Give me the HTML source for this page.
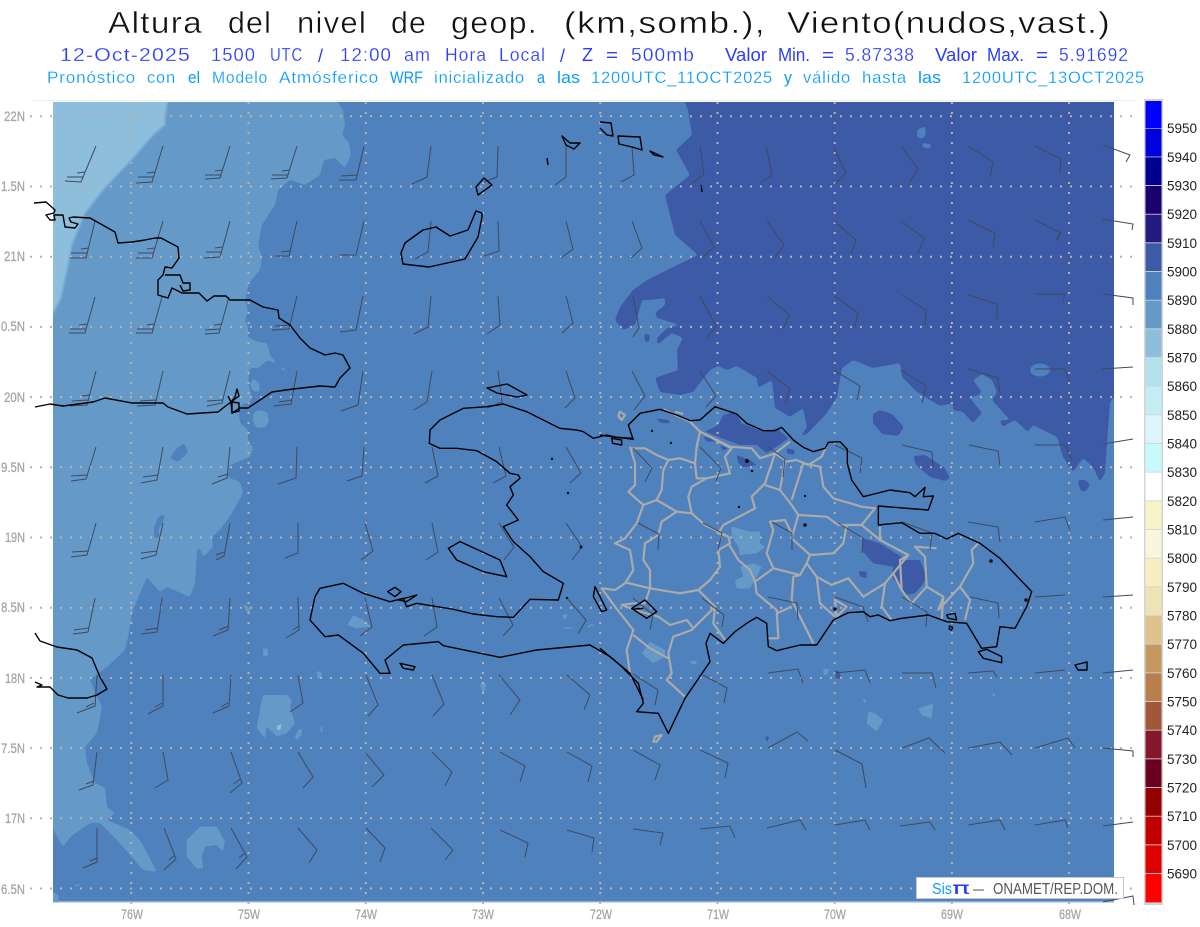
<!DOCTYPE html>
<html lang="es"><head><meta charset="utf-8"><title>Altura del nivel de geop.</title>
<style>
html,body{margin:0;padding:0;background:#fff}
svg{display:block;font-family:"Liberation Sans",sans-serif}
text{white-space:pre}
.s path{vector-effect:non-scaling-stroke}
.ax{font-size:14px;fill:#a6a6a6;stroke:#a6a6a6;stroke-width:.3px}
.cb{font-size:13.5px;fill:#222}
.t1 text{font-size:31px;fill:#111;stroke:#fff;stroke-width:.45px;letter-spacing:1.2px}
.t2 text{font-size:18px;fill:#2a3cff;stroke:#fff;stroke-width:.22px;letter-spacing:1px}
.t3 text{font-size:17px;fill:#0a9aff;stroke:#fff;stroke-width:.22px;letter-spacing:.8px}
.t2 .n,.t3 .n{letter-spacing:0;stroke-width:0}
</style></head><body>
<svg width="1200" height="927" viewBox="0 0 1200 927" xmlns="http://www.w3.org/2000/svg">
<defs>
<filter id="sm" x="-5%" y="-5%" width="110%" height="110%" color-interpolation-filters="sRGB">
<feGaussianBlur stdDeviation="1.4"/>
<feComponentTransfer><feFuncA type="linear" slope="7" intercept="-3"/></feComponentTransfer>
</filter>
<filter id="soft" x="0" y="0" width="1200" height="927" filterUnits="userSpaceOnUse">
<feGaussianBlur stdDeviation=".3"/>
</filter>
</defs>
<rect width="1200" height="927" fill="#fff"/>

<g class="t1">
<text x="108" y="33" textLength="95" lengthAdjust="spacingAndGlyphs">Altura</text>
<text x="228" y="33" textLength="44" lengthAdjust="spacingAndGlyphs">del</text>
<text x="297" y="33" textLength="70" lengthAdjust="spacingAndGlyphs">nivel</text>
<text x="391" y="33" textLength="36" lengthAdjust="spacingAndGlyphs">de</text>
<text x="451" y="33" textLength="87" lengthAdjust="spacingAndGlyphs">geop.</text>
<text x="564" y="33" textLength="202" lengthAdjust="spacingAndGlyphs">(km,somb.),</text>
<text x="787" y="33" textLength="324" lengthAdjust="spacingAndGlyphs">Viento(nudos,vast.)</text>
</g>
<g class="t2">
<text x="60" y="61" textLength="131" lengthAdjust="spacingAndGlyphs">12-Oct-2025</text>
<text x="211" y="61" textLength="45" lengthAdjust="spacingAndGlyphs">1500</text>
<text x="270" y="61" textLength="33" lengthAdjust="spacingAndGlyphs">UTC</text>
<text class="n" x="318" y="62" font-size="20">/</text>
<text x="340" y="61" textLength="52" lengthAdjust="spacingAndGlyphs">12:00</text>
<text x="404" y="61" textLength="27" lengthAdjust="spacingAndGlyphs">am</text>
<text x="445" y="61" textLength="42" lengthAdjust="spacingAndGlyphs">Hora</text>
<text x="499" y="61" textLength="47" lengthAdjust="spacingAndGlyphs">Local</text>
<text class="n" x="560" y="62" font-size="20">/</text>
<text class="n" x="582" y="61" textLength="11" lengthAdjust="spacingAndGlyphs">Z</text>
<text class="n" x="606" y="61" textLength="12" lengthAdjust="spacingAndGlyphs">=</text>
<text x="631" y="61" textLength="64" lengthAdjust="spacingAndGlyphs">500mb</text>
<text class="n" x="725" y="61" textLength="42" lengthAdjust="spacingAndGlyphs">Valor</text>
<text class="n" x="778" y="61" textLength="32" lengthAdjust="spacingAndGlyphs">Min.</text>
<text class="n" x="822" y="61" textLength="12" lengthAdjust="spacingAndGlyphs">=</text>
<text x="845" y="61" textLength="70" lengthAdjust="spacingAndGlyphs">5.87338</text>
<text class="n" x="935" y="61" textLength="42" lengthAdjust="spacingAndGlyphs">Valor</text>
<text class="n" x="987" y="61" textLength="37" lengthAdjust="spacingAndGlyphs">Max.</text>
<text class="n" x="1036" y="61" textLength="12" lengthAdjust="spacingAndGlyphs">=</text>
<text x="1059" y="61" textLength="70" lengthAdjust="spacingAndGlyphs">5.91692</text>
</g>
<g class="t3">
<text x="47" y="83" textLength="89" lengthAdjust="spacingAndGlyphs">Pronóstico</text>
<text x="147" y="83" textLength="29" lengthAdjust="spacingAndGlyphs">con</text>
<text class="n" x="188" y="83" textLength="12" lengthAdjust="spacingAndGlyphs">el</text>
<text x="212" y="83" textLength="56" lengthAdjust="spacingAndGlyphs">Modelo</text>
<text x="279" y="83" textLength="100" lengthAdjust="spacingAndGlyphs">Atmósferico</text>
<text class="n" x="390" y="83" textLength="33" lengthAdjust="spacingAndGlyphs">WRF</text>
<text x="434" y="83" textLength="91" lengthAdjust="spacingAndGlyphs">inicializado</text>
<text class="n" x="537" y="83" textLength="8" lengthAdjust="spacingAndGlyphs">a</text>
<text class="n" x="557" y="83" textLength="23" lengthAdjust="spacingAndGlyphs">las</text>
<text x="591" y="83" textLength="182" lengthAdjust="spacingAndGlyphs">1200UTC_11OCT2025</text>
<text class="n" x="784" y="83" textLength="8" lengthAdjust="spacingAndGlyphs">y</text>
<text x="803" y="83" textLength="48" lengthAdjust="spacingAndGlyphs">válido</text>
<text x="862" y="83" textLength="45" lengthAdjust="spacingAndGlyphs">hasta</text>
<text class="n" x="918" y="83" textLength="23" lengthAdjust="spacingAndGlyphs">las</text>
<text x="962" y="83" textLength="183" lengthAdjust="spacingAndGlyphs">1200UTC_13OCT2025</text>
</g>

<line x1="33" y1="100.5" x2="1135" y2="100.5" stroke="#eee"/>
<rect x="53" y="102" width="1061" height="800" fill="#4f81bd"/>
<rect x="53" y="901" width="1061" height="1.5" fill="#8db0d8"/>

<clipPath id="mp"><rect x="53" y="102" width="1061" height="800"/></clipPath>
<g clip-path="url(#mp)">
<g filter="url(#sm)">
<path fill="#6499c8" d="M45,95L333,95L343,110L345,125L342,135L349,143L351,155L345,168L335,158L324,160L320,175L305,185L290,180L278,190L275,205L262,225L258,245L262,258L260,270L249,283L245,300L248,310L245,320L248,328L248,337L258,342L267,343L270,355L282,370L293,373L268,360L258,368L250,368L248,382L252,400L238,407L240,423L248,430L248,440L253,448L250,457L230,465L227,477L240,482L243,493L232,513L220,530L212,537L213,547L203,557L200,548L197,550L195,583L190,597L167,587L160,592L147,577L133,610L128,637L125,650L107,667L100,672L90,680L102,707L97,733L85,747L87,763L95,783L105,788L107,807L115,813L107,820L130,830L140,840L157,872L143,870L117,840L100,823L90,823L70,837L63,847L45,815Z"/>
<path fill="#8dbfdd" d="M45,95L169,95L165,117L165,125L153,135L136,155L103,190L84,215L72,245L67,270L61,298L55,310L45,325Z"/>
</g>
<g fill="#4f81bd" filter="url(#sm)">
<path d="M175,450L184,443L188,452L178,462L170,458Z"/><path d="M158,517L165,514L163,522L158,530L160,538L154,538L154,528Z"/>
</g>
<g fill="#6499c8" filter="url(#sm)">
<path d="M253,378L260,384L259,392L253,391L250,385Z"/>
<path d="M258,410L267,412L269,420L266,427L257,428L253,422L253,414Z"/>
</g>
<g filter="url(#sm)" fill="#3c5aa6">
<path d="M682,95L688,110L692,135L676,150L690,175L665,195L675,235L698,255L657,275L647,280L633,290L620,307L615,320L623,330L635,325L642,300L650,300L665,298L665,305L655,313L657,318L680,325L667,328L657,338L657,345L672,333L683,338L677,350L678,370L655,378L660,392L680,395L693,392L710,370L718,366L727,370L737,366L757,378L758,388L772,380L775,408L790,417L803,408L807,427L800,437L808,433L827,413L837,397L842,368L853,360L873,368L900,363L902,377L917,392L927,398L940,406L953,403L953,410L963,412L973,423L982,413L970,398L978,395L982,392L973,380L982,374L992,380L997,392L992,400L1010,420L1000,420L1002,427L1015,420L1028,432L1033,425L1057,437L1063,457L1073,472L1083,458L1093,467L1100,482L1105,473L1110,402L1114,397L1125,397L1125,95Z"/>
<path d="M644,333L650,335L649,342L645,342Z"/>
<path d="M1080,480L1078,480L1080,490L1085,492L1090,485L1086,480Z"/>
<path d="M880,410L892,414L904,427L898,436L882,434L873,423L873,414Z"/>
<path d="M913,456L925,455L945,468L950,478L945,481L930,477L916,465Z"/>
</g>
<g fill="#4f81bd" filter="url(#sm)">
<ellipse cx="1040" cy="370" rx="10" ry="6.5"/>
<path d="M917,130L925,126L926,135L922,139L917,137Z"/><path d="M921,143L931,144L931,148L924,148Z"/>
</g>
<g transform="translate(600,390) scale(.33333)">
<g fill="#3c5aa6" filter="url(#sm)">
<path d="M315,125L355,105L370,75L405,65L425,100L490,125L530,115L565,145L530,170L500,190L470,165L420,165L380,150Z"/>
<path d="M310,140L340,145L350,155L320,155Z"/><path d="M358,165L385,175L370,182Z"/>
<path d="M170,85L205,90L210,100L180,98Z"/>
<path d="M410,195L450,210L470,225L430,232L415,220Z"/>
<path d="M560,175L585,180L580,195L562,190Z"/>
<path d="M790,445L840,460L920,510L960,510L980,560L970,580L945,610L915,615L900,590L875,560L880,530L820,520L785,480Z"/>
<path d="M775,545L800,545L800,565L780,560Z"/>
<path d="M705,840L720,845L722,865L707,865Z"/><path d="M495,1040L508,1040L500,1058Z"/>
</g>
<g fill="#6499c8" filter="url(#sm)">
<path d="M395,410L450,425L480,425L480,460L495,470L470,490L420,495L415,470L395,440Z"/>
<path d="M420,530L460,520L485,530L465,570L450,595L410,595L405,570L430,560Z"/>
<path d="M125,790L150,755L195,780L195,800L160,820Z"/>
<path d="M270,812L290,812L290,822L275,822Z"/>
<path d="M805,965L825,970L850,990L830,1025L800,1000Z"/>
<path d="M955,955L1000,940L995,985L965,975Z"/>
<path d="M670,835L688,838L680,855L670,855Z"/><path d="M1175,905L1188,915L1180,922Z"/>
<path d="M787,925L800,930L795,940Z"/>
</g>
</g>
<g transform="translate(300,380) scale(.33333)" fill="#6499c8" filter="url(#sm)">
<path d="M160,705L190,720L215,740L170,745L142,735Z"/>
<path d="M50,875L65,875L65,895L52,895Z"/><path d="M540,910L560,910L550,948Z"/>
<path d="M785,705L805,702L795,720Z"/><path d="M865,735L888,730L862,745Z"/><path d="M780,742L845,742L800,747Z"/>
</g>
<g transform="translate(0,600) scale(.33333)">
<g fill="#6499c8" filter="url(#sm)">
<path d="M790,285L860,285L875,300L870,320L885,370L860,400L830,410L800,380L795,415L770,385L785,300Z"/>
<path d="M895,390L905,385L905,405L890,420L885,410Z"/>
<path d="M788,145L803,145L805,165L790,170Z"/><path d="M950,215L965,215L965,235L952,235Z"/><path d="M962,378L968,378L968,397L962,397Z"/>
<path d="M600,680L650,680L675,725L668,755L650,735L615,740L605,770L610,805L590,805L560,770L560,720Z"/>
<path d="M730,10L750,25L750,42L738,35Z"/>
<path d="M220,853L245,853L230,860Z"/><path d="M150,870L175,885L175,915L150,915Z"/>
</g>
<path fill="#8dbfdd" d="M830,378L845,372L842,388L832,390Z"/>
</g>
</g>

<g stroke="#b8b2aa" stroke-width="2" stroke-dasharray="2 8" fill="none">
<path d="M30,116.3H1136M30,186.5H1136M30,256.7H1136M30,326.9H1136M30,397.1H1136M30,467.3H1136M30,537.5H1136M30,607.7H1136M30,677.9H1136M30,748.1H1136M30,818.3H1136M30,888.5H1136"/>
<path d="M131.3,102V908M248.5,102V908M365.8,102V908M483,102V908M600.2,102V908M717.5,102V908M834.7,102V908M951.9,102V908M1069.1,102V908"/>
</g>

<g filter="url(#soft)">
<g class="s" transform="translate(600,390) scale(.33333)" fill="none" stroke="#aaa" stroke-width="2.2" stroke-linejoin="round">
<path d="M90,170L105,220L105,285L85,305L130,345L110,400L75,445L45,460L90,480L100,540L75,580L45,600L5,595L45,650L100,720L80,780L90,850"/>
<path d="M95,175L135,175L170,195L205,210L240,205L285,220L290,170L300,125L270,95L190,58"/>
<path d="M205,210L190,240L185,300L170,330L130,345"/>
<path d="M170,330L230,365L275,370L265,320L275,290L320,265L390,250L375,200L395,175L300,125"/>
<path d="M285,220L290,265L320,265"/>
<path d="M300,125L390,170L455,175L480,205L525,190L570,155"/>
<path d="M525,190L495,280L455,320L465,355L370,405L355,430L385,440L390,460L355,480L360,530L330,570L295,600L240,610L150,595L80,578"/>
<path d="M230,365L185,395L175,435L135,460L130,510L150,540L150,595L135,640"/>
<path d="M275,370L315,405L385,440"/>
<path d="M385,460L415,510L450,540L465,575L470,610L530,660L535,745L505,745"/>
<path d="M495,285L540,300L575,345L595,375L680,380L715,405L785,405L825,355L785,350L700,325L670,290L660,230L610,220L575,330"/>
<path d="M540,300L555,215L590,210L625,225L665,200L680,165"/>
<path d="M525,190L555,210"/>
<path d="M595,375L575,445L630,495L620,520L600,555L520,535L500,490L520,420L510,395L555,390L575,430"/>
<path d="M630,495L700,490L730,460L740,405"/>
<path d="M620,520L650,560L695,585L745,565L790,620L855,580L845,650L875,690"/>
<path d="M650,560L660,640L705,680"/>
<path d="M600,555L580,560L575,630L640,760"/>
<path d="M520,535L465,575"/><path d="M575,650L530,670"/>
<path d="M785,405L840,450L925,495L880,550L905,600L935,640L980,590L975,500L945,470L1010,475"/>
<path d="M925,495L900,510L905,600"/><path d="M855,580L880,550"/>
<path d="M980,590L1030,620L1015,660L1080,590L1110,630L1095,690"/>
<path d="M1080,590L1120,520L1115,480L1135,460"/>
<path d="M1030,620L1025,690"/><path d="M840,410L840,450"/>
<path d="M295,600L345,650L295,700L275,720L220,740L205,790L215,850L200,870L255,920"/>
<path d="M345,650L340,700L375,750"/>
<path d="M135,640L100,640L65,645L105,660L175,680L210,705L260,690L280,715"/>
<path d="M100,735L150,775L205,805"/>
<path d="M705,630L710,680L740,650L702,628"/>
<path d="M60,65L75,75L65,90L55,78Z"/><path d="M225,65L250,72"/>
<path d="M165,1040L185,1035L170,1055L160,1055Z"/>
</g>

<path fill="none" stroke="#3f4a5e" stroke-width="1" d="
M96,146L81,182L65,181M83,177L67,177M85,172L77,173
M163,146L152,182L136,183M153,177L138,177M155,172L147,173
M230,146L220,178L205,179M221,175L205,175M223,170L215,171
M297,146L287,178L271,179M288,175L272,175M290,170L282,171
M364,146L356,180L339,180M357,175L341,176
M431,146L427,177L412,184M427,177L421,180
M498,146L497,177L484,182
M566,146L566,177L555,185
M632,146L634,175L621,182
M700,146L704,175L692,183
M766,146L772,175L760,183
M834,148L846,173L835,184
M901,146L918,169L909,183
M968,146L993,162L990,177
M1035,146L1061,159L1060,173
M1103,145L1130,155L1126,162

M95,221L86,258L70,258M87,253L71,253M89,248L81,249
M163,221L152,258L136,258M153,253L138,253M155,248L147,249
M230,221L220,257L204,258M221,252L206,252M223,247L215,248
M297,221L289,256L275,256M290,251L281,252
M364,221L356,255L340,255
M431,221L428,252L415,259
M498,221L499,251L484,256
M566,221L573,249L561,258
M632,221L642,248L631,258
M700,221L714,247L703,257
M767,221L784,245L775,257
M834,221L856,240L851,254
M901,221L924,238L918,254
M968,220L995,233L993,248
M1035,220L1061,233L1056,240M1059,235L1058,241
M1102,219L1133,224L1132,230

M95,297L85,333L69,333M86,329L70,329M88,324L79,325
M162,297L152,333L136,333M153,329L137,329M155,324L147,325
M229,297L219,333L205,334M220,329L205,330M222,324L214,325
M297,296L289,329L272,330M290,325L275,326
M363,296L356,330L340,332
M431,296L428,327L414,334
M498,296L500,325L487,334
M566,296L573,323L562,333
M633,296L639,328L633,337
M700,296L716,326L706,339
M767,296L789,315L783,329
M835,296L858,313L855,327
M902,295L926,310L925,325
M969,295L997,304L997,319
M1035,294L1065,294L1063,301
M1103,294L1133,298L1133,305

M96,371L87,405L70,406M88,400L72,401M90,395L82,396
M163,371L155,405L137,406M156,400L140,401
M230,371L222,403L207,406M223,400L207,401
M297,371L291,404L274,406M292,400L279,402
M363,371L358,405L341,411
M432,371L427,402L414,410
M498,371L502,402L487,408
M566,371L575,398L565,408
M632,371L645,396L634,410
M700,371L716,396L706,407
M767,371L790,389L785,404
M835,371L860,386L857,400
M901,370L926,386L922,403
M968,369L998,378L1000,393
M1035,369L1065,369L1070,382
M1102,369L1133,367

M96,447L86,479L71,481M87,475L71,476
M163,447L157,480L141,483M158,475L143,477
M230,447L227,478L212,484M228,474L218,477
M297,447L296,478L278,484
M364,447L362,476L347,481
M432,447L438,476L425,483
M499,447L506,476L493,483
M566,447L581,473L570,483
M633,448L652,468L645,482
M700,447L721,468L716,481
M767,446L785,459L783,477
M835,445L862,458L860,473
M902,445L932,452L933,467
M969,445L998,451L1000,466
M1035,445L1065,445L1072,460
M1103,444L1133,439

M96,523L87,555L71,557M88,551L72,552
M163,523L156,555L141,559M157,551L141,553
M230,523L224,556L216,560M224,552L216,555
M298,523L298,553L285,558
M365,523L373,551L361,560
M432,523L438,552L426,560
M499,523L514,547L504,560
M566,523L582,547L572,560
M638,523L659,534L658,550
M703,523L722,533L718,550
M772,522L792,533L792,550
M838,523L863,538L862,553
M902,522L932,533L930,550
M968,522L998,527L1000,542
M1035,522L1065,517L1070,530
M1103,520L1133,517

M95,598L88,632L73,634M89,628L74,630
M162,598L157,632L141,634M158,628L145,630
M230,598L228,630L213,636M229,626L219,630
M298,597L299,630L286,638M299,626L293,630
M365,598L372,627L360,636
M432,598L437,627L424,636
M499,598L513,625L503,636
M567,598L586,620L578,634
M633,598L653,615L650,630
M702,598L724,615L722,627
M768,597L797,603L798,620
M835,597L863,607L868,622
M902,597L927,612L926,627
M970,597L998,603L999,618
M1035,597L1065,595
M1103,597L1133,595

M97,675L95,706L77,713M94,703L86,707
M163,675L163,706L148,714M162,703L155,707
M231,675L229,706L213,713M228,703L221,707
M298,675L303,703L290,712
M366,675L378,705L368,716
M432,675L444,704L433,716
M499,675L520,700L510,715
M567,675L590,695L584,710
M633,674L658,690L655,705
M703,675L727,688L724,703
M768,673L798,669L803,683
M835,673L865,670L870,683
M902,673L932,673L936,688
M968,673L993,671L997,677
M1035,673L1065,670
M1103,673L1133,670

M97,752L93,785L79,790M94,781L86,784
M163,752L168,780L155,788
M231,752L242,783L230,793M240,779L234,784
M298,752L313,777L303,788
M365,752L384,775L372,787
M432,752L452,772L445,786
M500,752L525,766L520,782
M567,752L592,766L588,782
M633,750L660,765L655,780
M700,750L728,763L725,778
M768,748L797,732L808,741
M835,750L862,764L866,788
M902,748L929,738L945,753
M968,748L1000,742L1012,755
M1035,748L1068,738L1075,748
M1103,748L1133,751L1133,757

M97,828L97,862L83,868M97,858L90,861
M164,828L176,859L164,870M175,855L169,860
M231,828L247,857L236,869M245,853L239,858
M298,828L317,850L309,863
M366,828L385,848L380,862
M431,828L453,850L445,860
M500,830L528,843L525,857
M567,830L594,838L592,852
M633,829L663,833L660,845
M700,829L730,826L735,838
M767,828L800,820L806,830
M835,825L865,820L870,830
M900,826L930,822L935,830
M968,825L1000,820L1005,830
M1035,825L1065,820L1068,828
M1103,826L1133,822
M1103,902L1133,896L1134,905
"/>

<g class="s" fill="none" stroke="#000" stroke-width="1.4" stroke-linejoin="round">
<path d="M34,203L46,202L55,210L54,213L46,215L50,220L55,220L54,215L63,215L65,227L75,228L78,224L71,222L69,218L73,217L90,218L115,232L118,243L132,242L145,240L155,238L161,238L178,247L179,258L172,268L165,267L163,275L158,280L158,295L168,298L172,288L182,293L199,293L207,301L214,296L226,296L230,300L243,300L250,300L263,307L278,310L279,318L290,325L300,338L310,348L325,355L335,353L343,355L350,368L340,378L335,387L320,386L293,389L272,392L263,398L248,408L240,408L232,413L231,402L223,408L218,412L187,414L168,407L163,403L132,403L105,398L93,402L63,406L50,404L35,407"/>
<path d="M165,275L180,275L183,283L190,283L190,290L183,291L180,285"/>
<path d="M232,413L232,402L239,403L239,411ZM231,402L235,397L237,389L239,396ZM228,396L231,402"/>
<path d="M35,633L40,641L57,647L77,650L92,658L100,677L107,689L97,695L87,698L68,698L58,695L50,687L37,687L42,685L35,682"/>
<path d="M482,213L476,211L468,230L450,236L436,227L423,230L405,243L401,253L403,264L429,267L465,259L478,237L482,217Z"/>
<path d="M476,187L484,178L492,185L478,195Z"/>
<path d="M562,136L566,145L574,149L580,143L570,143Z"/>
<path d="M547,158L548,165"/>
<path d="M600,122L611,123L613,136L607,135L600,128"/>
<path d="M618,136L640,137L642,150L632,147L619,144Z"/>
<path d="M650,151L663,157L654,155Z"/>
<path d="M701,185L702,192"/>
<path d="M487,388L507,384L527,395L517,397L497,393Z"/>
<path d="M1075,665L1087,662L1087,670L1078,670Z"/>
</g>
<g class="s" transform="translate(300,380) scale(.33333)" fill="none" stroke="#000" stroke-width="1.4" stroke-linejoin="round">
<path d="M1000,175L950,172L920,165L880,175L850,155L830,150L780,145L720,115L680,95L610,72L560,80L490,85L450,105L420,120L390,150L388,190L420,205L470,205L530,212L590,245L630,280L655,285L660,295L630,320L640,345L620,375L655,420L610,440L640,485L690,530L730,575L790,610L775,660L690,658L640,712L590,710L520,702L460,688L350,670L320,680L310,655L270,665L190,640L130,610L60,625L45,650L30,720L75,770L115,765L190,820L240,880L270,880L255,840L310,795L415,785L430,797L600,832L710,810L870,795L930,830L990,880L1030,960"/>
<path d="M445,505L480,485L600,540L620,590L550,575L470,540Z"/>
<path d="M300,850L345,860L340,870L310,865Z"/>
<path d="M263,635L285,622L303,635L285,650Z"/>
<path d="M295,660L350,645L320,665Z"/>
<path d="M885,620L920,690L905,695L880,650Z"/>
</g>
<g class="s" transform="translate(600,390) scale(.33333)" fill="none" stroke="#000" stroke-width="1.4" stroke-linejoin="round">
<path d="M100,150L85,105L120,70L180,58L230,75L270,92L300,90L345,50L375,60L410,72L440,100L490,122L525,122L545,112L580,150L610,172L640,185L675,175L685,157L720,155L742,178L742,220L755,270L790,320L870,300L930,308L945,320L975,292L970,320L1000,318L985,360L835,348L835,405L905,398L960,430L1005,430L1040,447L1075,430L1140,460L1200,505L1295,605L1280,650L1245,715L1200,710L1190,770L1145,775L1100,700L1040,695L985,675L905,685L870,692L835,675L810,680L790,665L745,668L700,690L650,765L600,765L530,782L505,770L500,700L470,682L440,700L405,725L370,760L330,730L318,760L330,815L255,925L205,1030L175,970L110,965L130,940L115,880L60,825L0,775"/>
<path d="M1135,785L1160,778L1205,800L1205,818L1150,805Z"/>
<path d="M95,655L135,630L170,665L140,685Z"/>
<path d="M95,658L130,655"/>
<path d="M0,135L35,140L100,148M35,145L65,150L65,165L38,160Z"/>
<path d="M1040,675L1065,670L1070,690L1045,685Z"/>
<path d="M1048,708L1058,712L1055,720L1048,718Z"/>
</g>
</g>
<g fill="#111">
<circle cx="652" cy="431" r="1.2"/><circle cx="671" cy="443" r="1.2"/><circle cx="747" cy="461" r="2"/><circle cx="752" cy="471" r="1.3"/><circle cx="805" cy="496" r="1.2"/><circle cx="739" cy="507" r="1.2"/><circle cx="805" cy="525" r="1.8"/><circle cx="991" cy="561" r="1.8"/><circle cx="1026" cy="600" r="1.8"/><circle cx="835" cy="609" r="1.8"/><circle cx="568" cy="493" r="1.2"/><circle cx="552" cy="459" r="1.2"/><circle cx="581" cy="547" r="1.5"/><circle cx="567" cy="598" r="1.2"/>
</g>

<g class="ax">
<text x="4" y="121" textLength="21" lengthAdjust="spacingAndGlyphs">22N</text>
<text x="1" y="191" textLength="24" lengthAdjust="spacingAndGlyphs">1.5N</text>
<text x="4" y="261" textLength="21" lengthAdjust="spacingAndGlyphs">21N</text>
<text x="1" y="331" textLength="24" lengthAdjust="spacingAndGlyphs">0.5N</text>
<text x="4" y="402" textLength="21" lengthAdjust="spacingAndGlyphs">20N</text>
<text x="1" y="472" textLength="24" lengthAdjust="spacingAndGlyphs">9.5N</text>
<text x="5" y="542" textLength="20" lengthAdjust="spacingAndGlyphs">19N</text>
<text x="1" y="612" textLength="24" lengthAdjust="spacingAndGlyphs">8.5N</text>
<text x="5" y="683" textLength="20" lengthAdjust="spacingAndGlyphs">18N</text>
<text x="1" y="753" textLength="24" lengthAdjust="spacingAndGlyphs">7.5N</text>
<text x="5" y="823" textLength="20" lengthAdjust="spacingAndGlyphs">17N</text>
<text x="1" y="894" textLength="24" lengthAdjust="spacingAndGlyphs">6.5N</text>
<text x="121" y="919" textLength="22" lengthAdjust="spacingAndGlyphs">76W</text>
<text x="238" y="919" textLength="22" lengthAdjust="spacingAndGlyphs">75W</text>
<text x="355" y="919" textLength="22" lengthAdjust="spacingAndGlyphs">74W</text>
<text x="472" y="919" textLength="22" lengthAdjust="spacingAndGlyphs">73W</text>
<text x="590" y="919" textLength="22" lengthAdjust="spacingAndGlyphs">72W</text>
<text x="707" y="919" textLength="22" lengthAdjust="spacingAndGlyphs">71W</text>
<text x="824" y="919" textLength="22" lengthAdjust="spacingAndGlyphs">70W</text>
<text x="941" y="919" textLength="22" lengthAdjust="spacingAndGlyphs">69W</text>
<text x="1059" y="919" textLength="22" lengthAdjust="spacingAndGlyphs">68W</text>
</g>

<rect x="916.5" y="877.5" width="207" height="21" fill="#fff" stroke="#c8c8c8"/>
<text x="932" y="894" font-size="16" fill="#0a9aff" textLength="20" lengthAdjust="spacingAndGlyphs">Sis</text>
<text x="952" y="894" font-size="17" fill="#2a3cff" textLength="18" lengthAdjust="spacingAndGlyphs" font-family="DejaVu Sans, sans-serif">π</text>
<text x="973" y="894" font-size="15" fill="#555" textLength="11" lengthAdjust="spacingAndGlyphs">–</text>
<text x="993" y="894" font-size="16" fill="#555" textLength="125" lengthAdjust="spacingAndGlyphs">ONAMET/REP.DOM.</text>

<rect x="1144" y="99" width="19" height="806" fill="#d4d4d4"/>
<g>
<rect x="1145.5" y="101" width="16" height="27.4" fill="#0000ff"/>
<rect x="1145.5" y="129" width="16" height="27.6" fill="#0000dc"/>
<rect x="1145.5" y="157.3" width="16" height="27.8" fill="#000090"/>
<rect x="1145.5" y="186" width="16" height="27.8" fill="#1a006f"/>
<rect x="1145.5" y="214.6" width="16" height="27.8" fill="#241a80"/>
<rect x="1145.5" y="243.3" width="16" height="27.8" fill="#3c5aa6"/>
<rect x="1145.5" y="272" width="16" height="27.8" fill="#4f81bd"/>
<rect x="1145.5" y="300.6" width="16" height="27.8" fill="#6499c8"/>
<rect x="1145.5" y="329.3" width="16" height="27.8" fill="#8dbfdd"/>
<rect x="1145.5" y="358" width="16" height="27.8" fill="#b3e0ec"/>
<rect x="1145.5" y="386.6" width="16" height="27.8" fill="#c4ecf4"/>
<rect x="1145.5" y="415.3" width="16" height="27.8" fill="#dcf5fa"/>
<rect x="1145.5" y="444" width="16" height="27.8" fill="#c8fafd"/>
<rect x="1145.5" y="472.6" width="16" height="27.8" fill="#ffffff"/>
<rect x="1145.5" y="501.3" width="16" height="27.8" fill="#f9f3c9"/>
<rect x="1145.5" y="530" width="16" height="27.8" fill="#faf5e0"/>
<rect x="1145.5" y="558.6" width="16" height="27.8" fill="#f7efc2"/>
<rect x="1145.5" y="587.3" width="16" height="27.8" fill="#efe2b3"/>
<rect x="1145.5" y="616" width="16" height="27.8" fill="#dfc28c"/>
<rect x="1145.5" y="644.6" width="16" height="27.8" fill="#c4985f"/>
<rect x="1145.5" y="673.3" width="16" height="27.8" fill="#b87f4d"/>
<rect x="1145.5" y="702" width="16" height="27.8" fill="#a0573a"/>
<rect x="1145.5" y="730.6" width="16" height="27.8" fill="#84172a"/>
<rect x="1145.5" y="759.3" width="16" height="27.8" fill="#6b0020"/>
<rect x="1145.5" y="788" width="16" height="27.8" fill="#960000"/>
<rect x="1145.5" y="816.6" width="16" height="27.8" fill="#c00000"/>
<rect x="1145.5" y="845.3" width="16" height="27.8" fill="#e00000"/>
<rect x="1145.5" y="874" width="16" height="28.4" fill="#ff0000"/>
</g>
<g class="cb">
<text x="1167" y="133">5950</text><text x="1167" y="162">5940</text><text x="1167" y="190.5">5930</text><text x="1167" y="219">5920</text><text x="1167" y="248">5910</text><text x="1167" y="276.5">5900</text><text x="1167" y="305">5890</text><text x="1167" y="334">5880</text><text x="1167" y="362.5">5870</text><text x="1167" y="391">5860</text><text x="1167" y="420">5850</text><text x="1167" y="448.5">5840</text><text x="1167" y="477">5830</text><text x="1167" y="506">5820</text><text x="1167" y="534.5">5810</text><text x="1167" y="563">5800</text><text x="1167" y="592">5790</text><text x="1167" y="620.5">5780</text><text x="1167" y="649">5770</text><text x="1167" y="678">5760</text><text x="1167" y="706.5">5750</text><text x="1167" y="735">5740</text><text x="1167" y="764">5730</text><text x="1167" y="792.5">5720</text><text x="1167" y="821">5710</text><text x="1167" y="850">5700</text><text x="1167" y="878.5">5690</text>
</g>
</svg>
</body></html>
